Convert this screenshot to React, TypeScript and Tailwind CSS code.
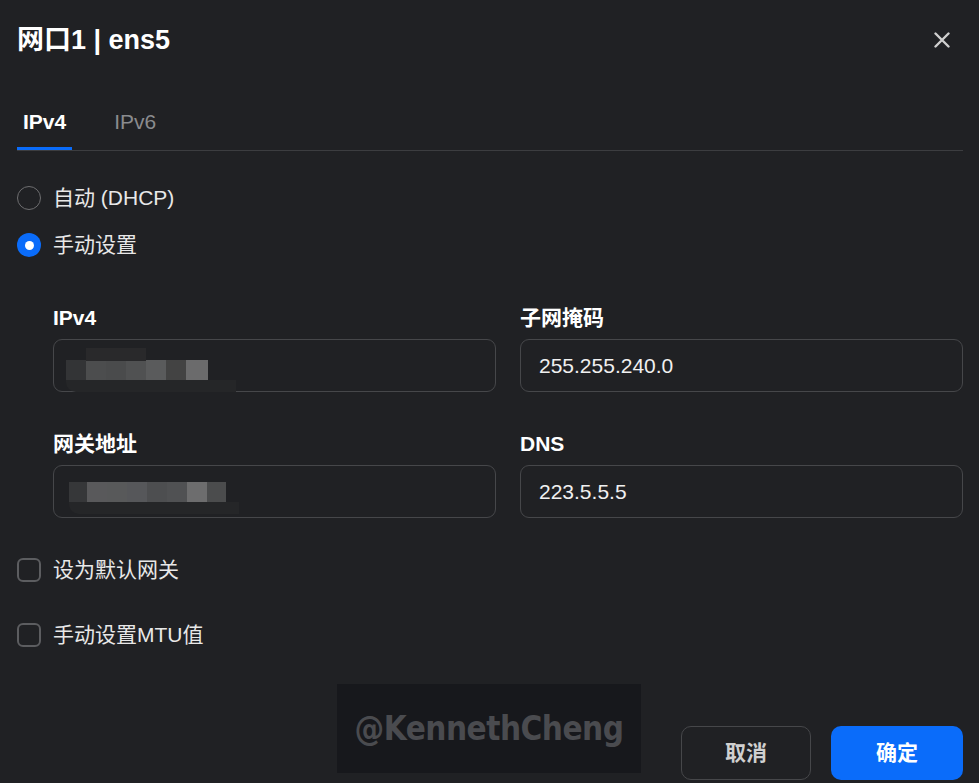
const blur1 = [
  { w: 20, c: '#333436' },
  { w: 20, c: '#4c4d4e' },
  { w: 20, c: '#4a4b4c' },
  { w: 20, c: '#505152' },
  { w: 20, c: '#5a5b5c' },
  { w: 20, c: '#434343' },
  { w: 22, c: '#6b6b6c' },
]

const blur2 = [
  { w: 18, c: '#363739' },
  { w: 20, c: '#59595b' },
  { w: 20, c: '#58595a' },
  { w: 20, c: '#56575a' },
  { w: 20, c: '#4d4e50' },
  { w: 20, c: '#505153' },
  { w: 20, c: '#6d6d6e' },
  { w: 19, c: '#4b4c4d' },
]

const Mosaic = ({ blocks, top, left }: { blocks: { w: number; c: string }[]; top: number; left: number }) => {
  return (
    <div className="absolute flex flex-col" style={{ top, left }}>
      <div className="flex h-[20px]">
        {blocks.map((b, i) => (
          <span key={i} className="h-full" style={{ width: b.w, background: b.c }} />
        ))}
      </div>
      <div className="h-[12px] w-[170px] rounded-bl-[10px] bg-[#252628]" />
    </div>
  )
}

const Field = ({ label, value, children }: { label: string; value?: string; children?: React.ReactNode }) => {
  return (
    <div className="flex flex-col">
      <div className="h-[28px] text-[21px] leading-[28px] font-bold text-white">{label}</div>
      <div className="relative mt-[7px] flex h-[53px] items-center rounded-[9px] border border-[#46474a] pl-[18px] text-[21px] text-[#f0f0f0]">
        {value}
        {children}
      </div>
    </div>
  )
}

export default function App() {
  return (
    <div
      className="relative h-[783px] w-[979px] overflow-hidden bg-[#202124] text-[#e8e8e8]"
      style={{ fontFamily: '"Liberation Sans", "Noto Sans CJK SC", sans-serif' }}
    >
      {/* Header */}
      <div className="flex h-[80px] items-center justify-between pl-[17px] pr-[29px]">
        <h1 className="text-[27px] font-bold text-white">网口1 | ens5</h1>
        <svg width="16" height="16" viewBox="0 0 16 16" className="text-[#cfcfcf]">
          <path d="M1.5 1.5L14.5 14.5M14.5 1.5L1.5 14.5" stroke="currentColor" strokeWidth="2.4" strokeLinecap="round" />
        </svg>
      </div>

      {/* Tabs */}
      <div className="ml-[17px] mr-[16px] flex gap-[36px] border-b border-[#3c3d40] pt-[28px]">
        <div className="border-b-[3px] border-[#0a6cfa] px-[6px] pb-[11px] text-[21px] leading-[28px] font-bold text-white">IPv4</div>
        <div className="px-[6px] pb-[14px] text-[21px] leading-[28px] text-[#8a8b8e]">IPv6</div>
      </div>

      {/* Mode */}
      <div className="ml-[17px] mt-[35px] flex flex-col gap-[23px]">
        <div className="flex h-[24px] items-center gap-[12px]">
          <span className="h-[24px] w-[24px] rounded-full border-[1.5px] border-[#6e6e70]" />
          <span className="text-[21px]">自动 (DHCP)</span>
        </div>
        <div className="flex h-[24px] items-center gap-[12px]">
          <span className="flex h-[24px] w-[24px] items-center justify-center rounded-full bg-[#0a6cfa]">
            <span className="h-[9px] w-[9px] rounded-full bg-white" />
          </span>
          <span className="text-[21px]">手动设置</span>
        </div>
      </div>

      {/* Fields */}
      <div className="ml-[53px] mr-[16px] mt-[47px] grid grid-cols-2 gap-x-[24px] gap-y-[38px]">
        <Field label="IPv4">
          <Mosaic blocks={blur1} top={20} left={12} />
          <div className="absolute left-[32px] top-[8px] h-[13px] w-[60px] bg-[#29292b]" />
        </Field>
        <Field label="子网掩码" value="255.255.240.0" />
        <Field label="网关地址">
          <Mosaic blocks={blur2} top={16} left={15} />
        </Field>
        <Field label="DNS" value="223.5.5.5" />
      </div>

      {/* Options */}
      <div className="ml-[17px] mt-[40px] flex flex-col gap-[41px]">
        <div className="flex h-[24px] items-center gap-[12px]">
          <span className="h-[24px] w-[24px] rounded-[6px] border-2 border-[#5c5d60]" />
          <span className="text-[21px]">设为默认网关</span>
        </div>
        <div className="flex h-[24px] items-center gap-[12px]">
          <span className="h-[24px] w-[24px] rounded-[6px] border-2 border-[#5c5d60]" />
          <span className="text-[21px]">手动设置MTU值</span>
        </div>
      </div>

      {/* Footer */}
      <div className="mr-[16px] mt-[79px] flex justify-end gap-[20px]">
        <button className="h-[54px] w-[130px] rounded-[10px] border border-[#46474a] text-[21px] font-bold text-[#d0d0d0]">取消</button>
        <button className="h-[54px] w-[132px] rounded-[10px] bg-[#0a6cfa] text-[21px] font-bold text-white">确定</button>
      </div>

      {/* Watermark */}
      <div className="absolute left-[337px] top-[684px] flex h-[89px] w-[304px] items-center justify-center bg-[#17181c]">
        <span
          className="text-[33px] font-bold tracking-[-0.5px] text-[#4a4b4f]"
          style={{ fontFamily: '"DejaVu Sans Condensed", "DejaVu Sans", sans-serif' }}
        >
          @KennethCheng
        </span>
      </div>
    </div>
  )
}
